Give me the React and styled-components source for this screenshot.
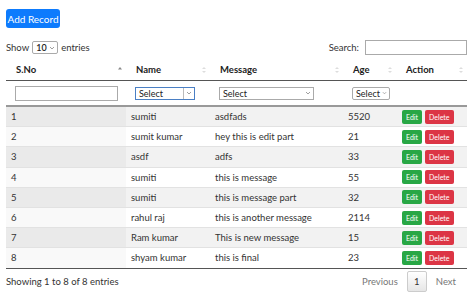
import React from "react";
import styled, { createGlobalStyle } from "styled-components";

const GlobalStyle = createGlobalStyle`
  body {
    margin: 0;
    background: #fff;
    font-family: Lato, "Open Sans", sans-serif;
    color: #212529;
  }
`;

const Page = styled.div`
  width: 474px;
  height: 294px;
  overflow: hidden;
  padding: 9px 7px 0 6px;
  box-sizing: border-box;
  font-size: 9.5px;
`;

const AddButton = styled.button`
  background: #0d7bfd;
  color: #fff;
  border: none;
  border-radius: 3px;
  font-family: inherit;
  font-size: 10px;
  height: 19px;
  width: 54px;
  padding: 0;
`;

const Toolbar = styled.div`
  display: flex;
  justify-content: space-between;
  align-items: center;
  margin-top: 11px;
  height: 17px;
  color: #333;
`;

const Inline = styled.div`
  display: flex;
  align-items: center;
  gap: 3px;
`;

const Box = styled.div`
  display: flex;
  align-items: center;
  justify-content: space-between;
  gap: 2px;
  box-sizing: border-box;
  width: ${(p) => p.w}px;
  height: ${(p) => p.h || 13}px;
  border: 1px solid ${(p) => (p.focus ? "#4a7fc4" : "#aaa")};
  background: #fff;
  padding: 0 2px 0 3px;
  font-size: 9px;
  color: #222;
  white-space: nowrap;
  border-radius: ${(p) => (p.round ? 2 : 0)}px;
`;

const Chevron = styled.span`
  display: flex;
  align-items: center;
  height: 100%;
  padding-left: 2px;
  border-left: ${(p) => (p.split ? "1px solid #bbb" : "none")};
`;

const SearchInput = styled.div`
  width: 102px;
  height: 15px;
  box-sizing: border-box;
  border: 1px solid #aaa;
  margin-left: 3px;
`;

const Table = styled.div`
  margin-top: 3px;
  width: 461px;
`;

const Row = styled.div`
  display: grid;
  grid-template-columns: 120px 84px 133px 53px 71px;
  height: ${(p) => p.h}px;
  border-bottom: ${(p) => p.border};
  box-sizing: border-box;
`;

const HeadCell = styled.div`
  position: relative;
  display: flex;
  align-items: center;
  padding-left: 10px;
  font-weight: 700;
  font-size: 9.5px;
  color: #222;
`;

const SortIcon = styled.svg`
  position: absolute;
  right: 4px;
  top: 7px;
`;

const FilterCell = styled.div`
  display: flex;
  align-items: center;
  padding-left: ${(p) => p.pl || 9}px;
`;

const Cell = styled.div`
  display: flex;
  align-items: center;
  padding-left: ${(p) => p.pl || 5}px;
  gap: 3px;
  color: #333;
  background: ${(p) =>
    p.sorted ? (p.odd ? "#eaeaea" : "#f9f9f9") : p.odd ? "#f2f2f2" : "#fff"};
`;

const ActionButton = styled.span`
  display: inline-flex;
  align-items: center;
  justify-content: center;
  height: 14px;
  padding: 0 4px;
  border-radius: 2px;
  color: #fff;
  font-size: 7px;
  background: ${(p) => (p.danger ? "#dc3545" : "#28a745")};
`;

const Footer = styled.div`
  display: flex;
  justify-content: space-between;
  align-items: center;
  height: 25px;
  color: #333;
`;

const Pager = styled.div`
  display: flex;
  align-items: center;
  gap: 9px;
  color: #777;
  padding-right: 11px;
`;

const PageNum = styled.span`
  display: flex;
  align-items: center;
  justify-content: center;
  width: 20px;
  height: 21px;
  box-sizing: border-box;
  border: 1px solid #ccc;
  border-radius: 2px;
  background: linear-gradient(#fff, #e6e6e6);
  color: #333;
`;

const Chev = () => (
  <svg width="6" height="4" viewBox="0 0 6 4">
    <path d="M1 1l2 2 2-2" fill="none" stroke="#888" strokeWidth="0.8" />
  </svg>
);

const Sort = ({ active }) => (
  <SortIcon width="4" height="8" viewBox="0 0 4 8">
    {active ? (
      <path d="M0 3.5L2 1l2 2.5z" fill="#888" />
    ) : (
      <path d="M0 3L2 1l2 2zM0 5l2 2 2-2z" fill="#ddd" />
    )}
  </SortIcon>
);

const rows = [
  [1, "sumiti", "asdfads", 5520],
  [2, "sumit kumar", "hey this is edit part", 21],
  [3, "asdf", "adfs", 33],
  [4, "sumiti", "this is message", 55],
  [5, "sumiti", "this is message part", 32],
  [6, "rahul raj", "this is another message", 2114],
  [7, "Ram kumar", "This is new message", 15],
  [8, "shyam kumar", "this is final", 23],
];

const heads = ["S.No", "Name", "Message", "Age", "Action"];

export default function App() {
  return (
    <Page>
      <GlobalStyle />
      <AddButton>Add Record</AddButton>
      <Toolbar>
        <Inline>
          Show
          <Box w={26} round>
            <b style={{ fontWeight: 600 }}>10</b>
            <Chev />
          </Box>
          entries
        </Inline>
        <Inline>
          Search:
          <SearchInput />
        </Inline>
      </Toolbar>
      <Table>
        <Row h={22} border="1px solid #555">
          {heads.map((h, i) => (
            <HeadCell key={h}>
              {h}
              <Sort active={i === 0} />
            </HeadCell>
          ))}
        </Row>
        <Row h={26} border="2px solid #999">
          <FilterCell>
            <Box w={103} h={15} />
          </FilterCell>
          <FilterCell>
            <Box w={60} focus>
              Select
              <Chevron split>
                <Chev />
              </Chevron>
            </Box>
          </FilterCell>
          <FilterCell>
            <Box w={95}>
              Select
              <Chev />
            </Box>
          </FilterCell>
          <FilterCell>
            <Box w={38} round>
              Select
              <Chev />
            </Box>
          </FilterCell>
          <FilterCell />
        </Row>
        {rows.map((r, i) => {
          const odd = i % 2 === 0;
          return (
            <Row
              key={r[0]}
              h={20.2}
              border={i === rows.length - 1 ? "1px solid #555" : "1px solid #e2e2e2"}
            >
              <Cell sorted odd={odd}>{r[0]}</Cell>
              <Cell odd={odd}>{r[1]}</Cell>
              <Cell odd={odd}>{r[2]}</Cell>
              <Cell odd={odd}>{r[3]}</Cell>
              <Cell odd={odd} pl={6}>
                <ActionButton>Edit</ActionButton>
                <ActionButton danger>Delete</ActionButton>
              </Cell>
            </Row>
          );
        })}
      </Table>
      <Footer>
        <span>Showing 1 to 8 of 8 entries</span>
        <Pager>
          <span>Previous</span>
          <PageNum>1</PageNum>
          <span>Next</span>
        </Pager>
      </Footer>
    </Page>
  );
}
